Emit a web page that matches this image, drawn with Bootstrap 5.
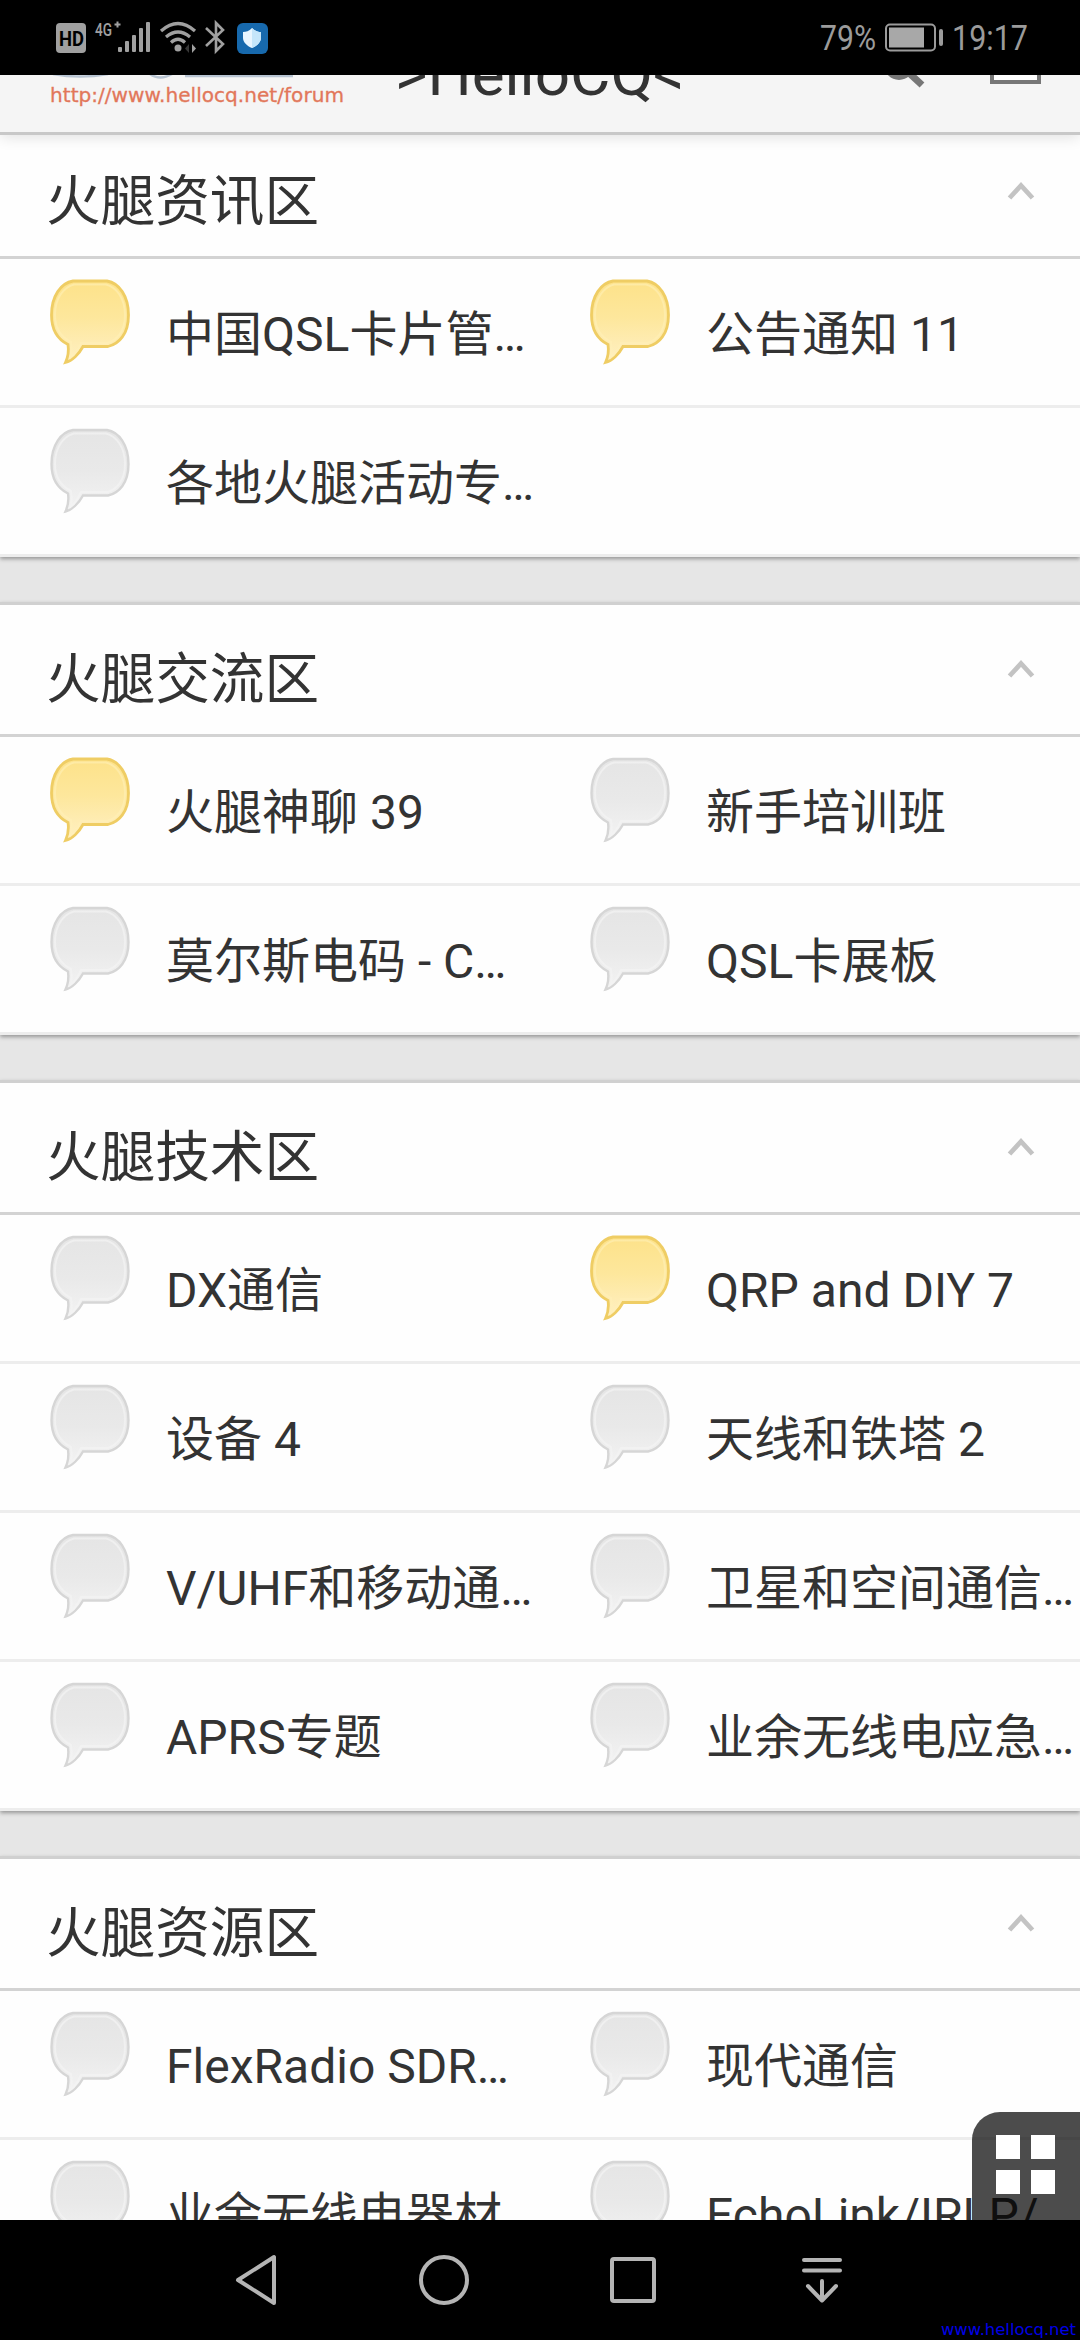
<!DOCTYPE html>
<html lang="zh-CN">
<head>
<meta charset="utf-8">
<meta name="viewport" content="width=device-width, initial-scale=1">
<title>&gt;HelloCQ&lt;</title>
<link href="https://cdn.jsdelivr.net/npm/bootstrap@5.3.0/dist/css/bootstrap.min.css" rel="stylesheet">
<style>
body{font-family:Roboto,"Noto Sans CJK SC",sans-serif;background:#e6e6e6;color:#333}
.phone{width:1080px;height:2340px}
.status-bar{height:75px;padding:0 52px 0 56px;z-index:3}
.status-bar svg{display:block}
.site-bar{height:60px;background:#f5f5f5;border-bottom:3px solid #c8c8c8;box-shadow:0 2px 14px rgba(0,0,0,.12);z-index:2;padding-left:50px;padding-right:39px}
.site-logo{width:294px}
.site-title{font-size:62px;line-height:70px;margin-left:51px;margin-top:-36px;height:80px}
.forum-list{min-height:0}
.zone{background:#fefefe;margin-bottom:45px;border-top:3px solid #d0d0d0;box-shadow:0 2px 4px rgba(0,0,0,.35)}
.zone-first{margin-top:-11px}
.zone-head{height:132px;border-bottom:3px solid #d3d3d3;padding:0 45px 0 46px}
.zone-head h2{font-size:54.6px;font-weight:400;line-height:80px;margin:34px 0 0}
.zone-head svg{margin-top:54px}
.forum-row{height:149px;border-bottom:3px solid #ededed}
.forum{padding-left:50px;font-size:48px;white-space:nowrap}
.forum svg{flex:none;margin-top:20px;margin-right:36px}
.forum span{line-height:70px;margin-top:41px}
.quick{right:0;bottom:0;width:108px;height:108px;background:rgba(0,0,0,.7);border-top-left-radius:28px;padding:23px 0 0 24px}
.nav-bar{height:120px;padding-left:235px;z-index:3}
.nav-home{margin-left:142px}
.nav-recent{margin-left:141px}
.nav-drop{margin-left:145px}
.watermark{right:4px;bottom:0;font-family:"DejaVu Sans",sans-serif;font-size:16.4px;line-height:20px;color:#0000e6}
</style>
<script src="https://cdn.jsdelivr.net/npm/bootstrap@5.3.0/dist/js/bootstrap.bundle.min.js"></script>
</head>
<body>
<svg width="0" height="0" class="position-absolute">
  <defs>
    <linearGradient id="gy" x1="0" y1="0" x2="0" y2="1"><stop offset="0" stop-color="#fde28a"/><stop offset=".45" stop-color="#fde79c"/><stop offset="1" stop-color="#fff0c4"/></linearGradient>
    <linearGradient id="gg" x1="0" y1="0" x2="0" y2="1"><stop offset="0" stop-color="#e5e5e5"/><stop offset=".5" stop-color="#e9e9e9"/><stop offset="1" stop-color="#f3f3f3"/></linearGradient>
    <path id="shape" d="M23 2H57C69 4 78.500 17 78.500 36C78.500 55 69 65 58 67.500H33C29 75 22 82 15.500 83.500C18 78 19 72 18 65.500C7 60 1.500 49 1.500 36C1.500 17 11 4 23 2Z"/>
    <path id="gloss" d="M24 5.500H56C66 8 75 19 75 36C75 53 66 62 57 64H31C28 71 24 76 21 78.500C22 73 22 68 21 63C11 58 5 49 5 36C5 19 14 8 24 5.500Z"/>
    <symbol id="hot" viewBox="0 0 80 86"><use href="#shape" fill="url(#gy)" stroke="#efcd64" stroke-width="2.800"/><use href="#gloss" fill="none" stroke="#fff0b8" stroke-width="2" opacity=".6"/></symbol>
    <symbol id="idle" viewBox="0 0 80 86"><use href="#shape" fill="url(#gg)" stroke="#d6d6d6" stroke-width="2.400"/><use href="#gloss" fill="none" stroke="#f3f3f3" stroke-width="2" opacity=".7"/></symbol>
    <symbol id="up" viewBox="0 0 28 20"><path d="M2.500 17L14 4.500L25.500 17" fill="none" stroke="#c3c3c3" stroke-width="4.800"/></symbol>
  </defs>
</svg>
<div class="phone d-flex flex-column position-relative overflow-hidden">
  <header class="status-bar bg-black d-flex align-items-center justify-content-between position-relative flex-shrink-0">
    <svg width="213" height="75" viewBox="56 0 213 75">
      <rect x="56" y="23" width="30" height="30" rx="4" fill="#a0a0a0"/>
      <text x="59" y="45.500" font-family="Roboto,sans-serif" font-weight="700" font-size="21" textLength="25" lengthAdjust="spacingAndGlyphs" fill="#000">HD</text>
      <text x="95" y="36" font-family="Roboto,sans-serif" font-weight="500" font-size="19" textLength="17" lengthAdjust="spacingAndGlyphs" fill="#a0a0a0">4G</text>
      <path d="M117.500 21.500v6M114.500 24.500h6" stroke="#a0a0a0" stroke-width="2"/>
      <g fill="#a0a0a0"><rect x="118" y="47" width="4" height="5" rx="1"/><rect x="125" y="41" width="4" height="11" rx="1"/><rect x="132" y="35" width="4" height="17" rx="1"/><rect x="139" y="28" width="4" height="24" rx="1"/><rect x="146" y="22" width="4" height="30" rx="1"/><circle cx="178" cy="48" r="3.500"/><path d="M192 44l4 4.500-4 4.500z"/><path d="M189 44l-4 4.500 4 4.500z" opacity=".35"/></g>
      <g fill="none" stroke="#a0a0a0" stroke-width="3.200"><path d="M161 31Q178 16 195 31M166 37Q178 27 190 37M171 42.500Q178 36 185 42.500"/><path d="M206 28L223 44L216 51V23L223 30L206 46" stroke-width="2.600"/></g>
      <rect x="237" y="23" width="31" height="31" rx="6" fill="#1769ad"/>
      <path d="M252 28C255 31 258 32 261 32V38C261 42 257 46 252 48C247 46 243 42 243 38V32C246 32 249 31 252 28Z" fill="#e9f6ff"/><path d="M252 28C255 31 258 32 261 32V38C261 42 257 46 252 48Z" fill="#c5e6fa"/>
    </svg>
    <svg width="208" height="75" viewBox="820 0 208 75" font-family="Roboto,sans-serif" font-size="34.500" fill="#9b9b9b">
      <text x="820" y="50" textLength="56" lengthAdjust="spacingAndGlyphs">79%</text>
      <rect x="886" y="24.500" width="49" height="26" rx="4" fill="none" stroke="#9b9b9b" stroke-width="2"/><rect x="889" y="27.500" width="35" height="20" fill="#a8a8a8"/><rect x="939" y="29" width="4" height="17" rx="2"/>
      <text x="952" y="50" textLength="76" lengthAdjust="spacingAndGlyphs">19:17</text>
    </svg>
  </header>
  <div class="site-bar position-relative d-flex align-items-start flex-shrink-0">
    <svg class="site-logo" height="57" viewBox="50 75 294 57"><path d="M53 74Q80 79 108 74M150 74Q160 81 172 74M185 76H293" fill="none" stroke="#b8c4d2" stroke-width="2.500"/><text x="50" y="101.500" font-family="DejaVu Sans,sans-serif" font-size="20" textLength="294" lengthAdjust="spacingAndGlyphs" fill="#e2775a" stroke="#e2775a" stroke-width=".3">http://www.hellocq.net/forum</text></svg>
    <span class="site-title">&gt;HelloCQ&lt;</span>
    <svg class="ms-auto" width="156" height="57" viewBox="885 75 156 57"><circle cx="899" cy="65" r="12" fill="none" stroke="#777" stroke-width="6"/><path d="M908 72L922 85" stroke="#777" stroke-width="7"/><rect x="992" y="50" width="47" height="32" fill="#fff" stroke="#777" stroke-width="4"/></svg>
  </div>
  <main class="forum-list flex-grow-1 position-relative overflow-hidden">
    <section class="zone zone-first">
      <div class="zone-head d-flex justify-content-between align-items-start"><h2>火腿资讯区</h2><svg width="28" height="20"><use href="#up"/></svg></div>
      <div class="forum-row row g-0">
        <div class="forum col-6 d-flex align-items-start"><svg width="80" height="86"><use href="#hot"/></svg><span>中国QSL卡片管…</span></div>
        <div class="forum col-6 d-flex align-items-start"><svg width="80" height="86"><use href="#hot"/></svg><span>公告通知 11</span></div>
      </div>
      <div class="forum-row row g-0">
        <div class="forum col-6 d-flex align-items-start"><svg width="80" height="86"><use href="#idle"/></svg><span>各地火腿活动专…</span></div>
      </div>
    </section>
    <section class="zone">
      <div class="zone-head d-flex justify-content-between align-items-start"><h2>火腿交流区</h2><svg width="28" height="20"><use href="#up"/></svg></div>
      <div class="forum-row row g-0">
        <div class="forum col-6 d-flex align-items-start"><svg width="80" height="86"><use href="#hot"/></svg><span>火腿神聊 39</span></div>
        <div class="forum col-6 d-flex align-items-start"><svg width="80" height="86"><use href="#idle"/></svg><span>新手培训班</span></div>
      </div>
      <div class="forum-row row g-0">
        <div class="forum col-6 d-flex align-items-start"><svg width="80" height="86"><use href="#idle"/></svg><span>莫尔斯电码 - C…</span></div>
        <div class="forum col-6 d-flex align-items-start"><svg width="80" height="86"><use href="#idle"/></svg><span>QSL卡展板</span></div>
      </div>
    </section>
    <section class="zone">
      <div class="zone-head d-flex justify-content-between align-items-start"><h2>火腿技术区</h2><svg width="28" height="20"><use href="#up"/></svg></div>
      <div class="forum-row row g-0">
        <div class="forum col-6 d-flex align-items-start"><svg width="80" height="86"><use href="#idle"/></svg><span>DX通信</span></div>
        <div class="forum col-6 d-flex align-items-start"><svg width="80" height="86"><use href="#hot"/></svg><span>QRP and DIY 7</span></div>
      </div>
      <div class="forum-row row g-0">
        <div class="forum col-6 d-flex align-items-start"><svg width="80" height="86"><use href="#idle"/></svg><span>设备 4</span></div>
        <div class="forum col-6 d-flex align-items-start"><svg width="80" height="86"><use href="#idle"/></svg><span>天线和铁塔 2</span></div>
      </div>
      <div class="forum-row row g-0">
        <div class="forum col-6 d-flex align-items-start"><svg width="80" height="86"><use href="#idle"/></svg><span>V/UHF和移动通…</span></div>
        <div class="forum col-6 d-flex align-items-start"><svg width="80" height="86"><use href="#idle"/></svg><span>卫星和空间通信…</span></div>
      </div>
      <div class="forum-row row g-0">
        <div class="forum col-6 d-flex align-items-start"><svg width="80" height="86"><use href="#idle"/></svg><span>APRS专题</span></div>
        <div class="forum col-6 d-flex align-items-start"><svg width="80" height="86"><use href="#idle"/></svg><span>业余无线电应急…</span></div>
      </div>
    </section>
    <section class="zone">
      <div class="zone-head d-flex justify-content-between align-items-start"><h2>火腿资源区</h2><svg width="28" height="20"><use href="#up"/></svg></div>
      <div class="forum-row row g-0">
        <div class="forum col-6 d-flex align-items-start"><svg width="80" height="86"><use href="#idle"/></svg><span>FlexRadio SDR…</span></div>
        <div class="forum col-6 d-flex align-items-start"><svg width="80" height="86"><use href="#idle"/></svg><span>现代通信</span></div>
      </div>
      <div class="forum-row row g-0">
        <div class="forum col-6 d-flex align-items-start"><svg width="80" height="86"><use href="#idle"/></svg><span>业余无线电器材</span></div>
        <div class="forum col-6 d-flex align-items-start"><svg width="80" height="86"><use href="#idle"/></svg><span>EchoLink/IRLP/</span></div>
      </div>
    </section>
    <div class="quick position-absolute"><svg class="d-block" width="59" height="59" fill="#fff"><path d="M0 0h24v24H0zM35 0h24v24H35zM0 35h24v24H0zM35 35h24v24H35z"/></svg></div>
  </main>
  <nav class="nav-bar bg-black d-flex align-items-center position-relative flex-shrink-0">
    <svg width="42" height="52" viewBox="0 0 42 52" fill="none" stroke="#b4b4b4" stroke-width="4" stroke-linejoin="round"><path d="M39 3V49L3 26Z"/></svg>
    <svg class="nav-home" width="50" height="50" viewBox="0 0 50 50" fill="none" stroke="#b4b4b4" stroke-width="4"><circle cx="25" cy="25" r="23"/></svg>
    <svg class="nav-recent" width="46" height="46" viewBox="0 0 46 46" fill="none" stroke="#b4b4b4" stroke-width="4"><rect x="2" y="2" width="42" height="42" rx="2"/></svg>
    <svg class="nav-drop" width="42" height="46" viewBox="0 0 42 46" fill="none" stroke="#b4b4b4" stroke-width="4" stroke-linecap="round" stroke-linejoin="round"><path d="M3 3H39M3 13.500H39M21 24V43M7 29L21 43.500L35 29"/></svg>
    <span class="watermark position-absolute">www.hellocq.net</span>
  </nav>
</div>
</body>
</html>
